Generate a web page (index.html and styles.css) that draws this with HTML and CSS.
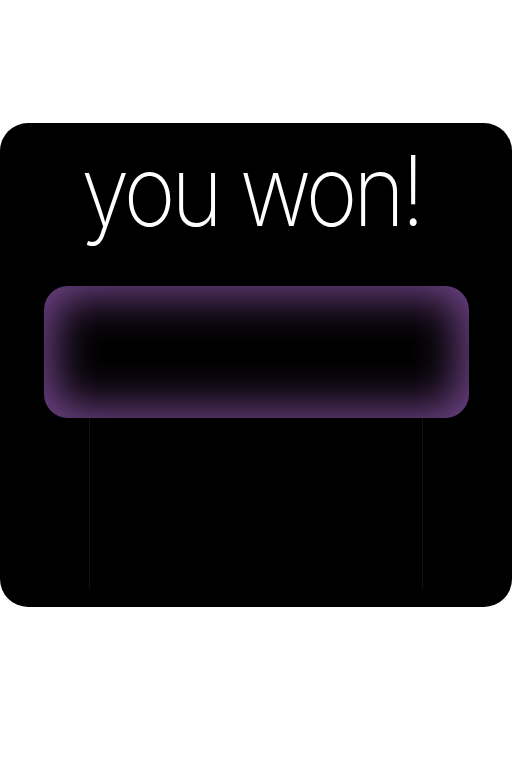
FILE: index.html
```
<!DOCTYPE html>
<html>
<head>
<meta charset="utf-8">
<link rel="stylesheet" href="styles.css">
</head>
<body>
<div class="card">
  <h1 class="title">you won!</h1>
  <div class="glow"></div>
  <div class="column"></div>
</div>
</body>
</html>
```
FILE: styles.css
```
html, body {
  margin: 0;
  padding: 0;
  background: #ffffff;
}
.card {
  margin-top: 123px;
  width: 512px;
  height: 484px;
  box-sizing: border-box;
  background: #000000;
  border-radius: 28px;
  display: flex;
  flex-direction: column;
  align-items: center;
  padding-top: 13px;
}
.title {
  margin: 0 0 0 -10px;
  font-family: Inter, "Open Sans", sans-serif;
  font-weight: 180;
  font-size: 98px;
  line-height: 110px;
  letter-spacing: -4.5px;
  color: #ffffff;
  transform: scaleX(0.9);
}
.glow {
  margin-top: 40px;
  width: 425px;
  height: 132px;
  border-radius: 24px;
  background: #000;
  box-shadow: inset 0 0 45px 10px #74468c;
}
.column {
  width: 334px;
  height: 171px;
  box-sizing: border-box;
  border-left: 1px solid #111111;
  border-right: 1px solid #111111;
}
```
